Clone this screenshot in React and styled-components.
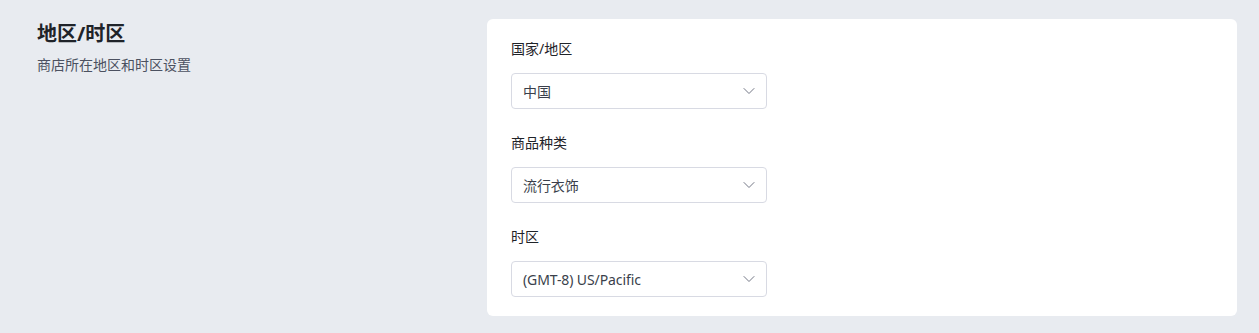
import React from 'react';
import styled, { createGlobalStyle } from 'styled-components';

const GlobalStyle = createGlobalStyle`
  * { box-sizing: border-box; }
  body {
    margin: 0;
    background: #e8ebf0;
    font-family: "Noto Sans", "Noto Sans CJK SC", sans-serif;
  }
`;

export const Page = styled.main`
  display: flex;
  align-items: flex-start;
  padding: 19px 22px 17px 22px;
  min-height: 333px;
`;

export const Intro = styled.section`
  width: 465px;
  flex-shrink: 0;
  padding-left: 15px;
`;

export const Title = styled.h2`
  margin: 0;
  padding-top: 1px;
  font-size: 20px;
  line-height: 28px;
  font-weight: 700;
  color: #1f2329;
`;

export const Desc = styled.p`
  margin: 7px 0 0;
  font-size: 14px;
  line-height: 20px;
  color: #4b5160;
`;

export const Card = styled.section`
  flex: 1;
  background: #fff;
  border-radius: 6px;
  padding: 20px 24px 19px;
  display: flex;
  flex-direction: column;
  gap: 24px;
`;

export const Field = styled.div`
  display: flex;
  flex-direction: column;
`;

export const Label = styled.label`
  font-size: 14px;
  line-height: 20px;
  color: #1f2329;
  margin-bottom: 14px;
`;

export const Select = styled.div`
  width: 256px;
  height: 36px;
  border: 1px solid #d8dae3;
  border-radius: 4px;
  display: flex;
  align-items: center;
  justify-content: space-between;
  padding: 0 11px 0 11px;
  font-size: 14px;
  letter-spacing: -0.1px;
  color: #3a3f4b;
  cursor: pointer;
`;

const Chevron = () => (
  <svg width="12" height="8" viewBox="0 0 12 8" fill="none">
    <path d="M1 1.5 L6 6.5 L11 1.5" stroke="#737785" strokeWidth="1" strokeLinecap="round" strokeLinejoin="round" />
  </svg>
);

const fields = [
  { label: '国家/地区', value: '中国' },
  { label: '商品种类', value: '流行衣饰' },
  { label: '时区', value: '(GMT-8) US/Pacific' },
];

export default function App() {
  return (
    <>
      <GlobalStyle />
      <Page>
        <Intro>
          <Title>地区/时区</Title>
          <Desc>商店所在地区和时区设置</Desc>
        </Intro>
        <Card>
          {fields.map((f) => (
            <Field key={f.label}>
              <Label>{f.label}</Label>
              <Select>
                <span>{f.value}</span>
                <Chevron />
              </Select>
            </Field>
          ))}
        </Card>
      </Page>
    </>
  );
}
